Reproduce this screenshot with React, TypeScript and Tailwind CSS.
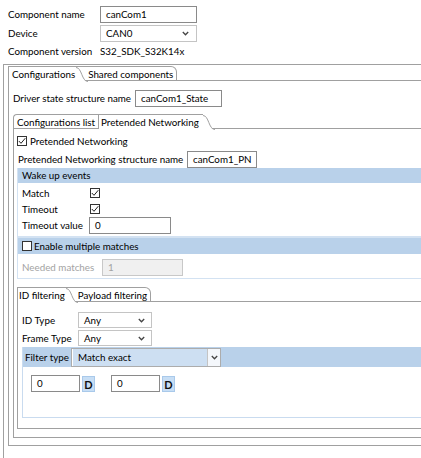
import React from "react";

const Chevron = () => (
  <svg width="7" height="5" viewBox="0 0 7 5" className="shrink-0">
    <path d="M0.8 1 L3.5 3.8 L6.2 1" fill="none" stroke="#444" strokeWidth="1.3" />
  </svg>
);

const Check = ({ checked }: { checked: boolean }) => (
  <div className="w-[10px] h-[10px] border border-[#333] bg-white shrink-0 flex items-center justify-center">
    {checked && (
      <svg width="8" height="8" viewBox="0 0 8 8">
        <path d="M0.8 4 L3 6.3 L7.3 1.2" fill="none" stroke="#222" strokeWidth="1" />
      </svg>
    )}
  </div>
);

const Curve = () => (
  <svg className="absolute left-full top-0 z-10" width="12" height="15" viewBox="0 0 12 15">
    <path d="M0 0 L0 0.5 C6 0.5 5 14.5 12 14.5 L12 15 L0 15 Z" fill="white" />
    <path d="M0 0.5 C6 0.5 5.5 14.5 12 14.5" fill="none" stroke="#a0a0a0" strokeWidth="1" />
  </svg>
);

const Input = ({ value, w, className = "" }: { value: string; w: string; className?: string }) => (
  <div className={`${w} shrink-0 h-[17px] border border-[#8a8a8a] bg-white px-[5px] leading-[15px] overflow-hidden whitespace-nowrap ${className}`}>
    {value}
  </div>
);

const Combo = ({ value, w }: { value: string; w: string }) => (
  <div className={`${w} shrink-0 h-[16px] border border-[#c4c4c4] bg-white pl-[5px] pr-[6px] flex items-center justify-between leading-[14px]`}>
    <span>{value}</span>
    <Chevron />
  </div>
);

const L = ({ w, children, className = "" }: { w: string; children: React.ReactNode; className?: string }) => (
  <span className={`${w} shrink-0 whitespace-nowrap overflow-visible ${className}`}>{children}</span>
);

const DBtn = () => (
  <div className="ml-[2px] mt-[1px] w-[13px] h-[16px] bg-[#c7def5] border border-[#a9c9ea] flex items-center justify-center font-bold text-[11px] leading-none text-[#111]">D</div>
);

export default function App() {
  return (
    <div className="w-[421px] h-[458px] bg-white overflow-hidden flex flex-col text-[9.8px] text-black whitespace-nowrap font-['Lato',sans-serif]">
      {/* top fields */}
      <div className="pl-[8px] pt-[6px] flex flex-col">
        <div className="h-[17px] flex items-center">
          <L w="w-[92px]">Component name</L>
          <Input value="canCom1" w="w-[97px]" />
        </div>
        <div className="h-[17px] mt-[2px] flex items-center">
          <L w="w-[92px]">Device</L>
          <div className="w-[97px] h-[17px] border border-[#c4c4c4] bg-white pl-[5px] pr-[7px] flex items-center justify-between">
            <span>CAN0</span>
            <Chevron />
          </div>
        </div>
        <div className="h-[16px] mt-[1px] flex items-center">
          <L w="w-[92px]">Component version</L>
          <span>S32_SDK_S32K14x</span>
        </div>
      </div>

      {/* outer box */}
      <div className="ml-[3px] mt-[5px] flex-1 border-l border-t border-[#a0a0a0] pt-[1px] pl-[4px] pb-[12px] flex flex-col">
        {/* folder 1 */}
        <div className="flex-1 flex flex-col">
          <div className="flex h-[15px] leading-[14px]">
            <div className="relative bg-white border-l border-t border-[#a0a0a0] pl-[3px] pr-[1px]">
              Configurations
              <Curve />
            </div>
            <div className="border-t border-r border-b border-[#a0a0a0] rounded-tr-[6px] pl-[12px] pr-[3px]">Shared components</div>
            <div className="flex-1 border-b border-[#a0a0a0]" />
          </div>
          <div className="flex-1 border-l border-b border-[#a0a0a0] pl-[4px] pt-[9px] pb-[7px] flex flex-col">
            <div className="h-[17px] flex items-center">
              <L w="w-[122px]">Driver state structure name</L>
              <Input value="canCom1_State" w="w-[87px]" />
            </div>

            {/* folder 2 */}
            <div className="mt-[7px] flex-1 flex flex-col">
              <div className="flex h-[15px] leading-[14px]">
                <div className="border-l border-t border-b border-[#a0a0a0] rounded-tl-[4px] pl-[3px] pr-[3px]">Configurations list</div>
                <div className="relative bg-white border-l border-t border-[#a0a0a0] pl-[2px] pr-[4px]">
                  Pretended Networking
                  <Curve />
                </div>
                <div className="flex-1 border-b border-[#a0a0a0]" />
              </div>
              <div className="flex-1 border-l border-b border-[#a0a0a0] pl-[3px] pb-[8px] flex flex-col">
                <div className="h-[16px] mt-[4px] flex items-center gap-[3px]">
                  <Check checked />
                  <span>Pretended Networking</span>
                </div>
                <div className="h-[17px] mt-[2px] pl-[1px] flex items-center">
                  <L w="w-[169px]">Pretended Networking structure name</L>
                  <Input value="canCom1_PN" w="w-[70px]" className="px-[3px]" />
                </div>

                {/* wake up events */}
                <div className="border-l border-b border-[#d3e2f2] flex flex-col">
                  <div className="h-[15px] bg-[#b9d1ea] pl-[4px] flex items-center">Wake up events</div>
                  <div className="pl-[4px] pt-[3px] pb-[2px] flex flex-col">
                    <div className="h-[14px] flex items-center">
                      <L w="w-[68px]">Match</L>
                      <Check checked />
                    </div>
                    <div className="h-[14px] mt-[2px] flex items-center">
                      <L w="w-[68px]">Timeout</L>
                      <Check checked />
                    </div>
                    <div className="h-[17px] mt-[1px] flex items-center">
                      <L w="w-[67px]">Timeout value</L>
                      <Input value="0" w="w-[82px]" />
                    </div>
                  </div>
                </div>

                {/* enable multiple matches */}
                <div className="border-l border-t border-b border-[#d3e2f2] flex flex-col">
                  <div className="h-[16px] bg-[#b9d1ea] pl-[4px] flex items-center gap-[2px]">
                    <Check checked={false} />
                    <span>Enable multiple matches</span>
                  </div>
                  <div className="pl-[4px] pt-[5px] pb-[2px]">
                    <div className="h-[17px] flex items-center">
                      <L w="w-[80px]" className="text-[#a3a3a3]">Needed matches</L>
                      <div className="w-[81px] h-[17px] border border-[#c8c8c8] bg-[#f0f0f0] px-[5px] leading-[15px] text-[#a3a3a3]">1</div>
                    </div>
                  </div>
                </div>

                {/* ID filtering folder */}
                <div className="mt-[8px] flex-1 flex flex-col">
                  <div className="flex h-[15px] leading-[14px]">
                    <div className="relative bg-white border-l border-t border-[#a0a0a0] pl-[1px] pr-[1px]">
                      ID filtering
                      <Curve />
                    </div>
                    <div className="border-t border-r border-b border-[#a0a0a0] rounded-tr-[6px] pl-[12px] pr-[3px]">Payload filtering</div>
                    <div className="flex-1 border-b border-[#a0a0a0]" />
                  </div>
                  <div className="flex-1 border-l border-b border-[#a0a0a0] pl-[4px] pt-[10px] pb-[10px] flex flex-col">
                    <div className="h-[16px] flex items-center">
                      <L w="w-[56px]">ID Type</L>
                      <Combo value="Any" w="w-[74px]" />
                    </div>
                    <div className="h-[16px] mt-[2px] flex items-center">
                      <L w="w-[56px]">Frame Type</L>
                      <Combo value="Any" w="w-[74px]" />
                    </div>

                    {/* filter type group */}
                    <div className="mt-[1px] flex-1 border-l border-b border-[#c9dbef] flex flex-col">
                      <div className="h-[20px] bg-[#b9d1ea] pl-[2px] flex items-center">
                        <L w="w-[46px]">Filter type</L>
                        <div className="w-[150px] shrink-0 h-[19px] border border-[#acacac] bg-[#cddff2] flex items-stretch">
                          <div className="flex-1 pl-[5px] flex items-center border-l border-white">Match exact</div>
                          <div className="w-[13px] bg-[#f4f7fb] border-l border-[#c4c4c4] flex items-center justify-center">
                            <Chevron />
                          </div>
                        </div>
                      </div>
                      <div className="flex-1 pl-[8px] pt-[8px] flex items-start">
                        <Input value="0" w="w-[49px]" />
                        <DBtn />
                        <Input value="0" w="w-[49px]" className="ml-[16px]" />
                        <DBtn />
                      </div>
                    </div>
                  </div>
                </div>
              </div>
            </div>
          </div>
        </div>
      </div>
    </div>
  );
}
